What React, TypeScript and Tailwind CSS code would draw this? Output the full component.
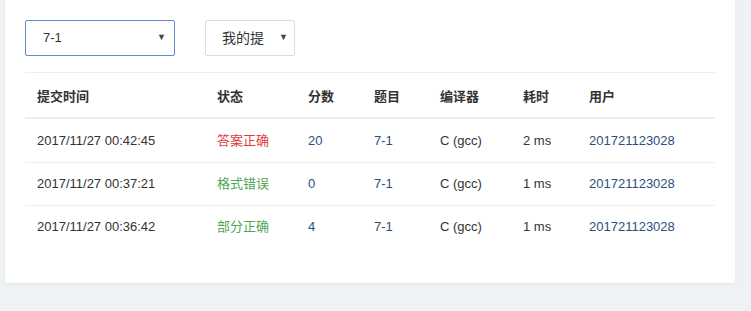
import React from "react";

const rows = [
  { time: "2017/11/27 00:42:45", status: "答案正确", ok: true, score: "20", ms: "2 ms" },
  { time: "2017/11/27 00:37:21", status: "格式错误", ok: false, score: "0", ms: "1 ms" },
  { time: "2017/11/27 00:36:42", status: "部分正确", ok: false, score: "4", ms: "1 ms" },
];

const font = { fontFamily: '"Liberation Sans", "Noto Sans CJK SC", sans-serif' };

export default function App() {
  return (
    <div className="w-[751px] h-[311px] bg-[#eff2f5] pl-[5px] overflow-hidden" style={font}>
      <div className="w-[730px] h-[283px] bg-white shadow-[0_1px_3px_rgba(0,0,0,0.06)] pt-[20px] pl-[20px]">
        <div className="flex gap-[30px]">
          <div className="w-[150px] h-[36px] border border-[#5d8ecb] rounded-[2px] flex items-center justify-between pl-[17px] pr-[8px] text-[13px] text-[#333]">
            <span>7-1</span>
            <span className="text-[9px] text-[#444]">▼</span>
          </div>
          <div className="w-[90px] h-[36px] border border-[#dcdcdc] rounded-[2px] flex items-center justify-between pl-[16px] pr-[6px] text-[14px] text-[#333]">
            <span>我的提</span>
            <span className="text-[9px] text-[#444]">▼</span>
          </div>
        </div>
        <div className="w-[690px] mt-[16px] border-t border-[#eeeeee] text-[13px] text-[#333]">
          <div className="grid grid-cols-[180px_91px_66px_66px_83px_66px_1fr] h-[46px] pt-[3px] items-center border-b-2 border-[#eeeeee] font-bold">
            <div className="pl-[12px]">提交时间</div>
            <div className="pl-[12px]">状态</div>
            <div className="pl-[12px]">分数</div>
            <div className="pl-[12px]">题目</div>
            <div className="pl-[12px]">编译器</div>
            <div className="pl-[12px]">耗时</div>
            <div className="pl-[12px]">用户</div>
          </div>
          {rows.map((r, i) => (
            <div
              key={i}
              className={
                "grid grid-cols-[180px_91px_66px_66px_83px_66px_1fr] h-[43px] items-center " +
                (i > 0 ? "border-t border-[#eeeeee]" : "")
              }
            >
              <div className="pl-[12px]">{r.time}</div>
              <div className={"pl-[12px] " + (r.ok ? "text-[#e0393e]" : "text-[#52a552]")}>{r.status}</div>
              <div className="pl-[12px] text-[#2c4f7c]">{r.score}</div>
              <div className="pl-[12px] text-[#2c4f7c]">7-1</div>
              <div className="pl-[12px]">C (gcc)</div>
              <div className="pl-[12px]">{r.ms}</div>
              <div className="pl-[12px] text-[#2c4f7c]">201721123028</div>
            </div>
          ))}
        </div>
      </div>
    </div>
  );
}
